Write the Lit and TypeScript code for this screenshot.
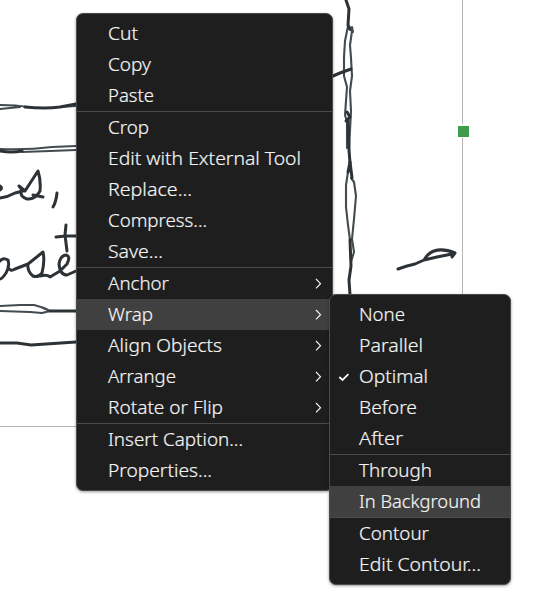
import { LitElement, html, svg, css, nothing } from "lit";
import { customElement, property } from "lit/decorators.js";

interface Item {
  label: string;
  width: number;
  arrow?: boolean;
  checked?: boolean;
  active?: boolean;
}
type Groups = Item[][];

const MAIN: Groups = [
  [
    { label: "Cut", width: 30 },
    { label: "Copy", width: 43 },
    { label: "Paste", width: 46 },
  ],
  [
    { label: "Crop", width: 41 },
    { label: "Edit with External Tool", width: 193 },
    { label: "Replace...", width: 84 },
    { label: "Compress...", width: 99 },
    { label: "Save...", width: 55 },
  ],
  [
    { label: "Anchor", width: 61, arrow: true },
    { label: "Wrap", width: 45, arrow: true, active: true },
    { label: "Align Objects", width: 114, arrow: true },
    { label: "Arrange", width: 68, arrow: true },
    { label: "Rotate or Flip", width: 115, arrow: true },
  ],
  [
    { label: "Insert Caption...", width: 135 },
    { label: "Properties...", width: 104 },
  ],
];

const SUB: Groups = [
  [
    { label: "None", width: 46 },
    { label: "Parallel", width: 64 },
    { label: "Optimal", width: 69, checked: true },
    { label: "Before", width: 58 },
    { label: "After", width: 44 },
  ],
  [
    { label: "Through", width: 73 },
    { label: "In Background", width: 122, active: true },
  ],
  [
    { label: "Contour", width: 70 },
    { label: "Edit Contour...", width: 122 },
  ],
];

@customElement("context-menu")
export class ContextMenu extends LitElement {
  @property({ attribute: false }) groups: Groups = [];

  static styles = css`
    :host {
      display: block;
      box-sizing: border-box;
      padding: 4px 0;
      border: 1px solid #4b4b4b;
      border-radius: 7px;
      background: #1e1e1e;
      box-shadow: 0 1px 3px rgba(0, 0, 0, 0.4);
      overflow: hidden;
      color: #f4f4f4;
      font: 18px/31px "Noto Sans", sans-serif;
      font-weight: 300;
    }
    .group + .group {
      border-top: 1px solid #4b4b4b;
    }
    .item {
      display: grid;
      grid-template-columns: var(--indent, 30px) 1fr 18px;
      align-items: center;
      height: 31px;
    }
    .active {
      background: #404040;
    }
    .label {
      width: 100%;
      height: 31px;
      overflow: visible;
      fill: currentColor;
      stroke: currentColor;
      stroke-width: 0.2;
    }
    .mark {
      display: block;
      fill: none;
      stroke: #f4f4f4;
    }
    .check {
      margin-left: 8px;
      stroke-width: 1.8;
    }
    .arrow {
      stroke-width: 1.2;
    }
  `;

  render() {
    return this.groups.map(
      (group) => html`<div class="group">
        ${group.map(
          (item) => html`<div class="item ${item.active ? "active" : ""}">
            <span>
              ${item.checked
                ? html`<svg class="mark check" width="12" height="12" viewBox="0 0 12 12">
                    <path d="M1.3 6 4.5 8.9 10.4 3.2" />
                  </svg>`
                : nothing}
            </span>
            <svg class="label">
              <text x="1" y="22" textLength=${item.width} lengthAdjust="spacingAndGlyphs">${item.label}</text>
            </svg>
            <span>
              ${item.arrow
                ? html`<svg class="mark arrow" width="8" height="12" viewBox="0 0 8 12">
                    <path d="M2 1 6.5 5.7 2 10.4" />
                  </svg>`
                : nothing}
            </span>
          </div>`
        )}
      </div>`
    );
  }
}

const THICK = [
  "M346 0 349 9 348 25 350 29",
  "M333 76 340 73 351 69",
  "M25 107Q45 109 60 107L76 104",
  "M0 151Q12 153 22 151",
  "M0 190Q3 188 0 186",
  "M0 198Q8 197 15 193L23 191 19 186 25 191 38 171Q41 180 40 191 35 200 27 199 20 197 21 191M33 195 43 197",
  "M57 193Q56 202 53 207",
  "M0 261Q3 257 8 260 10 267 6 273 2 279 0 279M8 267Q10 272 15 269L28 264 43 252Q45 261 42 273 38 278 33 276 27 271 28 264M40 276Q47 274 50 277L60 271 67 264Q71 256 66 255 60 256 59 264 60 275 67 275L76 271",
  "M66 225 65 235 67 251M56 237 66 236 76 236",
  "M50 311 76 311",
  "M0 343 17 343 31 345 76 342",
  "M347 112 350 117 346 121M348 120 349 150 350 163",
  "M350 162 348 172M350 162 352 178",
  "M350 240 351 266 349 280 350 295",
  "M398 269 407 266 415 264 424 260Q428 253 434 251 443 248 455 253L452 257M424 260 437 257 452 254",
];

const FINE = [
  "M0 105Q17 105 27 107M0 109 20 107M60 107 76 106",
  "M0 149Q28 150 52 147L76 146M22 152 50 151 76 150",
  "M0 306 20 305 34 305Q43 307 50 311M0 311 30 312 42 313 50 311",
  "M348 26 345 41 344 57 344 76 347 87 346 101 345 115 347 122 347 148",
  "M349 29 352 31 350 45 351 58 352 76 350 91 351 111 350 130 349 149M352 27 353 32",
  "M348 172 346 185 346 207 348 225 350 240M351 178 354 182 356 196 354 219 352 239 354 252 351 262",
];

@customElement("app-root")
export class AppRoot extends LitElement {
  static styles = css`
    :host {
      display: block;
      position: relative;
      width: 539px;
      height: 605px;
      overflow: hidden;
      background: #fff;
    }
    .canvas {
      display: block;
    }
    .frame {
      fill: none;
      stroke: #b5b5b5;
    }
    .thick,
    .fine {
      fill: none;
      stroke: #2c3235;
      stroke-linecap: round;
      stroke-linejoin: round;
    }
    .thick {
      stroke-width: 3;
    }
    .fine {
      stroke-width: 2.1;
      stroke: #414b50;
    }
    .gap {
      fill: #fff;
    }
    .handle {
      fill: #3f9c4b;
    }
    .main,
    .sub {
      position: absolute;
    }
    .main {
      left: 76px;
      top: 13px;
      width: 257px;
      --indent: 30px;
    }
    .sub {
      left: 329px;
      top: 294px;
      width: 182px;
      --indent: 28px;
    }
  `;

  render() {
    return html`
      <svg class="canvas" width="539" height="605" viewBox="0 0 539 605">
        <path class="frame" d="M462.5 0V426.5H0" />
        ${FINE.map((d) => svg`<path class="fine" d=${d} />`)}
        ${THICK.map((d) => svg`<path class="thick" d=${d} />`)}
        <rect class="gap" x="456" y="124" width="15" height="14" />
        <rect class="handle" x="458" y="126" width="11" height="11" />
      </svg>
      <context-menu class="main" .groups=${MAIN}></context-menu>
      <context-menu class="sub" .groups=${SUB}></context-menu>
    `;
  }
}
